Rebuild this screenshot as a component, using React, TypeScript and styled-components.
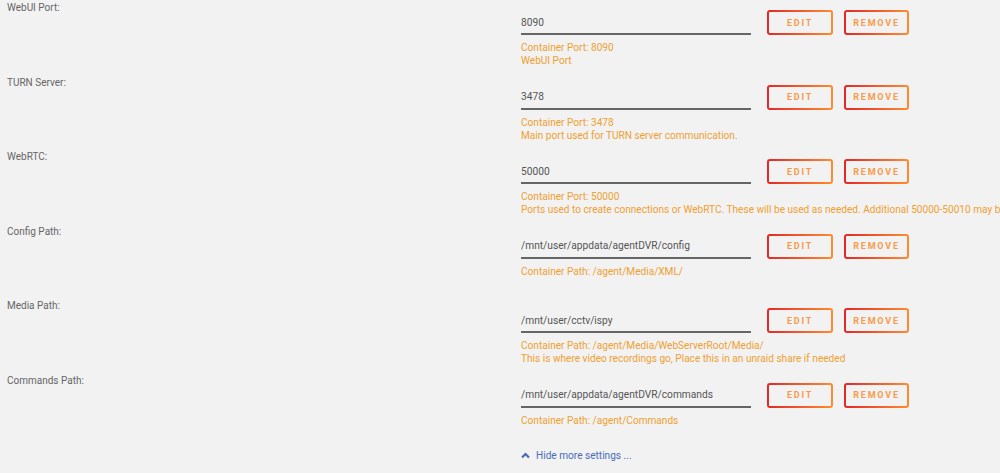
import React from "react";
import styled, { createGlobalStyle } from "styled-components";

interface Setting {
  label: string;
  value: string;
  target: string;
  description?: string;
}

const settings: Setting[] = [
  { label: "WebUI Port:", value: "8090", target: "Container Port: 8090", description: "WebUI Port" },
  {
    label: "TURN Server:",
    value: "3478",
    target: "Container Port: 3478",
    description: "Main port used for TURN server communication.",
  },
  {
    label: "WebRTC:",
    value: "50000",
    target: "Container Port: 50000",
    description:
      "Ports used to create connections or WebRTC. These will be used as needed. Additional 50000-50010 may be required depending on usage.",
  },
  {
    label: "Config Path:",
    value: "/mnt/user/appdata/agentDVR/config",
    target: "Container Path: /agent/Media/XML/",
  },
  {
    label: "Media Path:",
    value: "/mnt/user/cctv/ispy",
    target: "Container Path: /agent/Media/WebServerRoot/Media/",
    description: "This is where video recordings go, Place this in an unraid share if needed",
  },
  {
    label: "Commands Path:",
    value: "/mnt/user/appdata/agentDVR/commands",
    target: "Container Path: /agent/Commands",
  },
];

const GlobalStyle = createGlobalStyle`
  html, body {
    margin: 0;
    padding: 0;
    background: #f2f2f2;
    overflow: hidden;
  }
  body {
    font-family: Roboto, "Noto Sans", sans-serif;
  }
`;

const App: React.FC = () => {
  return (
    <>
      <GlobalStyle />
      <Page>
        {settings.map((s, i) => (
          <SettingRow key={i}>
            <Label>{s.label}</Label>
            <Field>
              <Controls>
                <ValueInput readOnly value={s.value} />
                <GradientButton $width={66}>Edit</GradientButton>
                <GradientButton $width={65}>Remove</GradientButton>
              </Controls>
              <Help>{s.target}</Help>
              <Help>{s.description || "\u00a0"}</Help>
            </Field>
          </SettingRow>
        ))}
        <FooterRow>
          <Toggle>
            <svg width="9" height="7" viewBox="0 0 9 7">
              <path d="M1 5.5 L4.5 2 L8 5.5" fill="none" stroke="#486dba" strokeWidth="2.2" />
            </svg>
            Hide more settings ...
          </Toggle>
        </FooterRow>
      </Page>
    </>
  );
};

const Page = styled.div`
  width: 1000px;
  height: 473px;
  overflow: hidden;
`;

const SettingRow = styled.div`
  display: grid;
  grid-template-columns: 521px 1fr;
  height: 74.6px;
`;

const Label = styled.div`
  padding-left: 7px;
  font-size: 10px;
  line-height: 16px;
  color: #666;
`;

const Field = styled.div`
  display: flex;
  flex-direction: column;
  min-width: 0;
`;

const Controls = styled.div`
  display: flex;
  align-items: flex-end;
  margin-top: 10px;
  margin-bottom: 6px;
`;

const ValueInput = styled.input`
  width: 230px;
  height: 24px;
  box-sizing: border-box;
  padding: 0;
  border: none;
  border-bottom: 2px solid #666;
  background: transparent;
  font-family: inherit;
  font-size: 10.2px;
  color: #555;
  outline: none;
  margin-right: 16px;
`;

const GradientButton = styled.button<{ $width: number }>`
  width: ${(p) => p.$width}px;
  height: 25px;
  box-sizing: border-box;
  margin-right: 11px;
  padding: 0;
  border: 2px solid transparent;
  border-radius: 3px;
  background: linear-gradient(#f2f2f2, #f2f2f2) padding-box,
    linear-gradient(90deg, #e22828, #ff8c2f) border-box;
  color: #f99a4a;
  font-family: inherit;
  font-size: 9px;
  font-weight: 700;
  letter-spacing: 1.8px;
  text-transform: uppercase;
  cursor: pointer;
`;

const Help = styled.div`
  font-size: 10.1px;
  line-height: 13px;
  color: #f0a030;
  white-space: nowrap;
`;

const FooterRow = styled.div`
  display: flex;
  padding-left: 521px;
`;

const Toggle = styled.a`
  display: flex;
  align-items: center;
  gap: 6px;
  font-size: 10.1px;
  line-height: 16px;
  color: #486dba;
  cursor: pointer;
`;

export default App;
